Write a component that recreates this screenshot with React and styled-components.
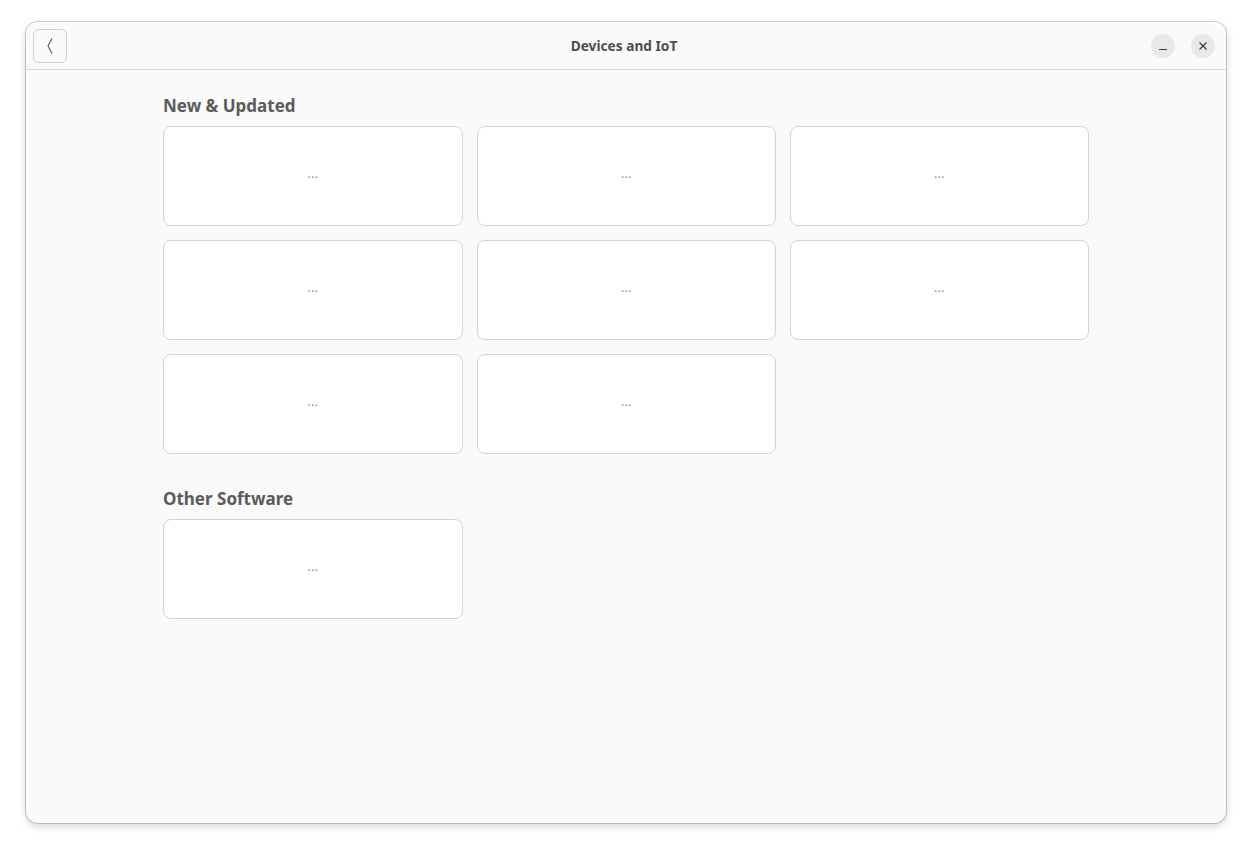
import React from 'react'
import styled, { createGlobalStyle } from 'styled-components'

const GlobalStyle = createGlobalStyle`
  body {
    margin: 0;
    background: #ffffff;
    font-family: "Noto Sans", "Open Sans", sans-serif;
  }
`

const Screen = styled.div`
  width: 1252px;
  height: 852px;
  padding: 22px 26px 0 26px;
  box-sizing: border-box;
`

const Window = styled.div`
  width: 1200px;
  height: 801px;
  background: #fafafa;
  border-radius: 12px;
  box-shadow: 0 0 0 1px rgba(0, 0, 0, 0.18), 0 3px 9px rgba(0, 0, 0, 0.18);
  overflow: hidden;
  display: flex;
  flex-direction: column;
`

const HeaderBar = styled.header`
  height: 47px;
  border-bottom: 1px solid #d6d6d6;
  background: #fafafa;
  display: grid;
  grid-template-columns: 1fr auto 1fr;
  align-items: center;
  padding: 0 11px 0 7px;
`

const BackButton = styled.button`
  width: 34px;
  height: 34px;
  border: 1px solid #cfcfcf;
  border-radius: 6px;
  background: #fafafa;
  display: flex;
  align-items: center;
  justify-content: center;
  padding: 0;
  justify-self: start;
  color: #555;
`

const Title = styled.h1`
  margin: 0;
  font-size: 13.7px;
  font-weight: 700;
  color: #4f4d4d;
`

const Controls = styled.div`
  justify-self: end;
  display: flex;
  gap: 16px;
`

const CircleButton = styled.button`
  width: 24px;
  height: 24px;
  border-radius: 50%;
  border: none;
  background: #e8e8e8;
  display: flex;
  align-items: center;
  justify-content: center;
  padding: 0;
  color: #3d3d3d;
`

const Content = styled.main`
  width: 926px;
  padding: 25px 0 0 137px;
`

const SectionTitle = styled.h2`
  margin: 0 0 9px 0;
  font-size: 17px;
  line-height: 22px;
  font-weight: 700;
  color: #5c5a5a;
`

const Grid = styled.div`
  display: grid;
  grid-template-columns: 300px 299px 299px;
  gap: 14px 14px;
  margin-bottom: ${p => p.$last ? 0 : '34px'};
`

const Card = styled.div`
  background: #ffffff;
  border: 1px solid #d4d4d4;
  border-radius: 8px;
  display: flex;
  align-items: center;
  justify-content: center;
  padding-bottom: 6px;
  height: 92px;
  font-size: 12px;
  color: #8a8a8a;
  letter-spacing: 0.5px;
`

const Section = ({ title, count, last }) => (
  <>
    <SectionTitle>{title}</SectionTitle>
    <Grid $last={last}>
      {Array.from({ length: count }).map((_, i) => (
        <Card key={i}>...</Card>
      ))}
    </Grid>
  </>
)

export default function App() {
  return (
    <Screen>
      <GlobalStyle />
      <Window>
        <HeaderBar>
          <BackButton aria-label="Back">
            <svg width="16" height="18" viewBox="0 0 16 18" fill="none">
              <path d="M10 1.5 L6 9 L10 16.5" stroke="#5a5a5a" strokeWidth="1.1" strokeLinejoin="round" />
            </svg>
          </BackButton>
          <Title>Devices and IoT</Title>
          <Controls>
            <CircleButton aria-label="Minimize">
              <svg width="10" height="10" viewBox="0 0 10 10">
                <path d="M1 8.5 H9" stroke="#3d3d3d" strokeWidth="1" />
              </svg>
            </CircleButton>
            <CircleButton aria-label="Close">
              <svg width="10" height="10" viewBox="0 0 10 10">
                <path d="M1.5 1.5 L8.5 8.5 M8.5 1.5 L1.5 8.5" stroke="#3d3d3d" strokeWidth="1.2" />
              </svg>
            </CircleButton>
          </Controls>
        </HeaderBar>
        <Content>
          <Section title="New & Updated" count={8} />
          <Section title="Other Software" count={1} last />
        </Content>
      </Window>
    </Screen>
  )
}
